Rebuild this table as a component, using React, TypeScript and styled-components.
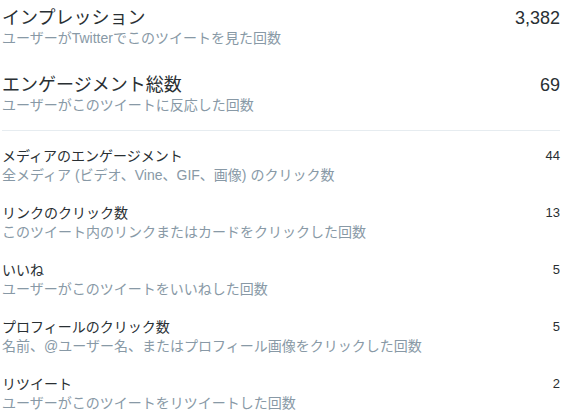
import React from "react";
import styled, { createGlobalStyle } from "styled-components";

const Global = createGlobalStyle`
  html, body { margin: 0; padding: 0; background: #ffffff; }
  body {
    font-family: "Liberation Sans", Arial, "Noto Sans CJK JP", sans-serif;
    -webkit-font-smoothing: antialiased;
  }
`;

const Page = styled.div`
  width: 566px;
  box-sizing: border-box;
  padding: 7px 6px 0 2px;
`;

const Section = styled.section<{ $big?: boolean }>`
  display: flex;
  flex-direction: column;
  gap: ${(p) => (p.$big ? "27px" : "19px")};
`;

const Divider = styled.hr`
  border: 0;
  border-top: 1px solid #e6ecf0;
  margin: 16px 0;
`;

const Row = styled.div`
  display: flex;
  justify-content: space-between;
  align-items: flex-start;
`;

const Info = styled.div`
  display: flex;
  flex-direction: column;
`;

const Title = styled.div<{ $big?: boolean }>`
  color: #292f33;
  font-size: ${(p) => (p.$big ? "18px" : "14px")};
  line-height: ${(p) => (p.$big ? "22px" : "18px")};
`;

const Desc = styled.div<{ $big?: boolean }>`
  color: #8899a6;
  font-size: 14px;
  line-height: ${(p) => (p.$big ? "18px" : "20px")};
`;

const Value = styled.div<{ $big?: boolean }>`
  color: #292f33;
  font-size: ${(p) => (p.$big ? "18px" : "13px")};
  line-height: ${(p) => (p.$big ? "22px" : "18px")};
`;

const big = [
  { t: "インプレッション", d: "ユーザーがTwitterでこのツイートを見た回数", v: "3,382" },
  { t: "エンゲージメント総数", d: "ユーザーがこのツイートに反応した回数", v: "69" },
];

const small = [
  { t: "メディアのエンゲージメント", d: "全メディア (ビデオ、Vine、GIF、画像) のクリック数", v: "44" },
  { t: "リンクのクリック数", d: "このツイート内のリンクまたはカードをクリックした回数", v: "13" },
  { t: "いいね", d: "ユーザーがこのツイートをいいねした回数", v: "5" },
  { t: "プロフィールのクリック数", d: "名前、@ユーザー名、またはプロフィール画像をクリックした回数", v: "5" },
  { t: "リツイート", d: "ユーザーがこのツイートをリツイートした回数", v: "2" },
];

export default function App() {
  return (
    <>
      <Global />
      <Page>
        <Section $big>
          {big.map((r) => (
            <Row key={r.t}>
              <Info>
                <Title $big>{r.t}</Title>
                <Desc $big>{r.d}</Desc>
              </Info>
              <Value $big>{r.v}</Value>
            </Row>
          ))}
        </Section>
        <Divider />
        <Section>
          {small.map((r) => (
            <Row key={r.t}>
              <Info>
                <Title>{r.t}</Title>
                <Desc>{r.d}</Desc>
              </Info>
              <Value>{r.v}</Value>
            </Row>
          ))}
        </Section>
      </Page>
    </>
  );
}
